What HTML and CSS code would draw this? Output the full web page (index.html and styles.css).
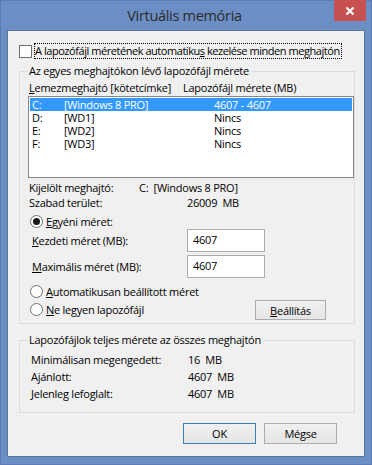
FILE: index.html
```html
<!DOCTYPE html>
<html lang="hu">
<head>
<meta charset="utf-8">
<title>Virtuális memória</title>
<link rel="stylesheet" href="styles.css">
</head>
<body>
<div class="window">
  <div class="titlebar">
    <span class="title">Virtuális memória</span>
    <div class="close">
      <svg width="10" height="10" viewBox="0 0 10 10"><path d="M1.5 1.5 L8.5 8.5 M8.5 1.5 L1.5 8.5" stroke="#fff" stroke-width="2.2" fill="none"/></svg>
    </div>
  </div>
  <div class="client">
    <div class="auto-row">
      <span class="checkbox"></span>
      <span class="focus">A lapozófájl méretének automatiku<u>s</u> kezelése minden meghajtón</span>
    </div>

    <fieldset class="group g1">
      <legend>Az egyes meghajtókon lévő lapozófájl mérete</legend>
      <div class="list-head">
        <span class="h-drive"><u>L</u>emezmeghajtó [kötetcímke]</span>
        <span>Lapozófájl mérete (MB)</span>
      </div>
      <div class="listbox">
        <div class="row sel"><span class="c1">C:</span><span class="c2">[Windows 8 PRO]</span><span>4607 - 4607</span></div>
        <div class="row"><span class="c1">D:</span><span class="c2">[WD1]</span><span>Nincs</span></div>
        <div class="row"><span class="c1">E:</span><span class="c2">[WD2]</span><span>Nincs</span></div>
        <div class="row"><span class="c1">F:</span><span class="c2">[WD3]</span><span>Nincs</span></div>
      </div>
      <div class="info">
        <div class="info-row"><span class="i-lbl">Kijelölt meghajtó:</span><span>C:&nbsp; [Windows 8 PRO]</span></div>
        <div class="info-row"><span class="i-lbl i-lbl-wide">Szabad terület:</span><span>26009&nbsp; MB</span></div>
      </div>
      <div class="radio-row r-custom"><span class="radio on"></span><span><u>E</u>gyéni méret:</span></div>
      <div class="field-row"><span class="f-lbl"><u>K</u>ezdeti méret (MB):</span><span class="input">4607</span></div>
      <div class="field-row f-second"><span class="f-lbl"><u>M</u>aximális méret (MB):</span><span class="input">4607</span></div>
      <div class="radio-row r-auto"><span class="radio"></span><span><u>A</u>utomatikusan beállított méret</span></div>
      <div class="radio-row r-none"><span class="radio"></span><span><u>N</u>e legyen lapozófájl</span><span class="btn btn-set"><u>B</u>eállítás</span></div>
    </fieldset>

    <fieldset class="group g2">
      <legend>Lapozófájlok teljes mérete az összes meghajtón</legend>
      <div class="tot-row"><span class="t-lbl">Minimálisan megengedett:</span><span>16&nbsp; MB</span></div>
      <div class="tot-row"><span class="t-lbl">Ajánlott:</span><span>4607&nbsp; MB</span></div>
      <div class="tot-row"><span class="t-lbl">Jelenleg lefoglalt:</span><span>4607&nbsp; MB</span></div>
    </fieldset>

    <div class="buttons">
      <span class="btn btn-ok">OK</span>
      <span class="btn">Mégse</span>
    </div>
  </div>
</div>
</body>
</html>
```
FILE: styles.css
```css
* { box-sizing: border-box; }
html, body { margin: 0; padding: 0; }
body {
  width: 372px;
  height: 465px;
  overflow: hidden;
  font-family: "Open Sans", "Noto Sans", sans-serif;
  font-size: 11px;
  line-height: 15px;
  letter-spacing: -0.25px;
  color: #000;
  white-space: nowrap;
}
u { text-decoration: underline; text-underline-offset: 1px; }

.window {
  width: 372px;
  height: 465px;
  background: #6b8ec4;
  border: 1px solid #5b7db3;
  padding: 0 6px 7px 6px;
  display: flex;
  flex-direction: column;
}
.titlebar {
  height: 29px;
  flex: none;
  position: relative;
  display: flex;
  justify-content: center;
  align-items: center;
}
.title {
  font-size: 14.5px;
  line-height: 18px;
  letter-spacing: -0.3px;
  color: #2b2b2b;
  margin-top: 1px;
  margin-left: -3px;
}
.close {
  position: absolute;
  right: -1px;
  top: -1px;
  width: 32px;
  height: 21px;
  background: #c75050;
  display: flex;
  align-items: center;
  justify-content: center;
}
.client {
  flex: 1;
  background: #f0f0f0;
  border: 1px solid #56779f;
  padding: 0 9px 0 11px;
  display: flex;
  flex-direction: column;
}
.auto-row {
  margin-top: 12px;
  height: 16px;
  display: flex;
  align-items: center;
}
.checkbox {
  width: 13px;
  height: 13px;
  border: 1px solid #707070;
  background: #fff;
  margin-right: 2px;
  flex: none;
}
.focus {
  border: 1px dotted #000;
  line-height: 14px;
  padding: 0 1px 0 0;
  letter-spacing: -0.45px;
}

.group {
  margin: 0;
  border: 1px solid #dcdcdc;
  padding: 0 0 0 8px;
  min-width: 0;
}
.group legend {
  padding: 0 2px 0 1px;
  margin-left: 0;
  line-height: 14px;
}
.g1 { margin-top: 5px; padding-bottom: 3px; }
.list-head {
  margin-top: 2px;
  height: 15px;
  padding-left: 1px;
  display: flex;
}
.h-drive { width: 154px; }
.listbox {
  margin-top: 1px;
  height: 82px;
  border: 1px solid #828790;
  background: #fff;
  padding: 1px;
}
.row {
  height: 13px;
  line-height: 13px;
  padding-left: 2px;
  display: flex;
}
.row.sel { background: #3399ff; color: #fff; }
.c1 { width: 32px; }
.c2 { width: 150px; }

.info { margin-top: 2px; }
.info-row {
  height: 15px;
  padding-left: 1px;
  display: flex;
}
.i-lbl { width: 110px; }
.i-lbl-wide { width: 158px; }

.radio-row {
  display: flex;
  align-items: center;
  height: 15px;
  padding-left: 2px;
}
.radio {
  width: 13px;
  height: 13px;
  border: 1px solid #707070;
  border-radius: 50%;
  background: #fff;
  margin-right: 3px;
  display: flex;
  align-items: center;
  justify-content: center;
  flex: none;
}
.radio.on::after {
  content: "";
  width: 7px;
  height: 7px;
  border-radius: 50%;
  background: #1a1a1a;
}
.r-custom { margin-top: 4px; }
.field-row {
  display: flex;
  align-items: center;
  height: 23px;
  padding-left: 4px;
}
.f-second { margin-top: 3px; }
.f-lbl { width: 155px; }
.input {
  width: 78px;
  height: 23px;
  border: 1px solid #abadb3;
  background: #fff;
  padding: 2px 0 0 5px;
  line-height: 15px;
}
.r-auto { margin-top: 6px; }
.r-none { height: 21px; margin-top: 0; }

.btn {
  display: flex;
  align-items: center;
  justify-content: center;
  height: 21px;
  width: 73px;
  border: 1px solid #acacac;
  background: linear-gradient(#f0f0f0, #e5e5e5);
}
.btn-set {
  width: 71px;
  height: 20px;
  margin-left: auto;
  margin-right: 28px;
  margin-top: 1px;
}

.g2 { margin-top: 9px; padding-top: 4px; padding-bottom: 10px; }
.tot-row {
  height: 17px;
  line-height: 17px;
  padding-left: 3px;
  display: flex;
}
.t-lbl { width: 157px; }

.buttons {
  margin-top: 10px;
  display: flex;
  justify-content: flex-end;
  gap: 8px;
  padding-right: 18px;
}
.btn-ok { border-color: #3c7fb1; }
```
